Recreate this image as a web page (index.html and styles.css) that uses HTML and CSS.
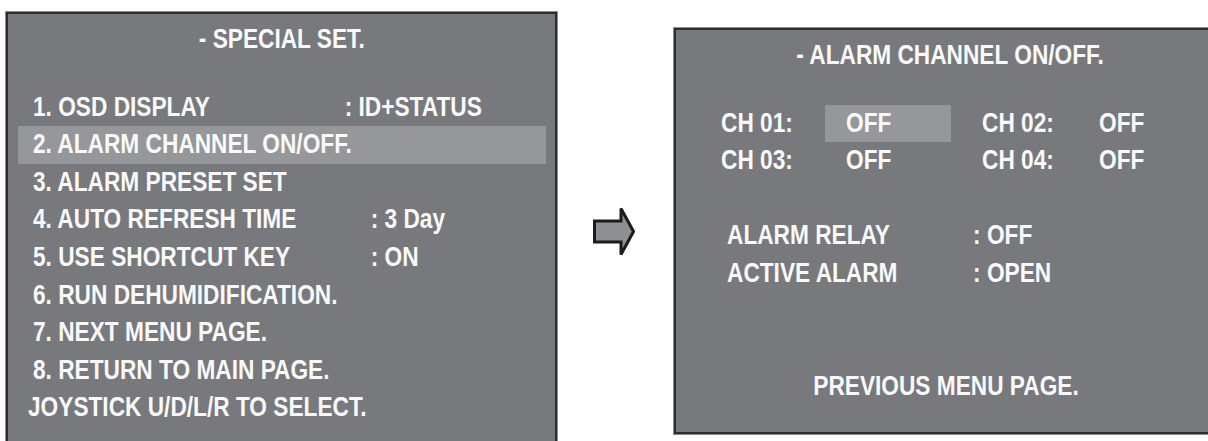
FILE: index.html
```html
<!DOCTYPE html>
<html lang="en">
<head>
    <meta charset="UTF-8">
    <meta name="viewport" content="width=device-width, initial-scale=1.0">
    <title>Special Set - Alarm Channel</title>
    <link rel="stylesheet" href="styles.css">
</head>
<body>

<div class="screen screen-special">
    <div class="screen-title"><span class="narrow center">- SPECIAL SET.</span></div>
    <ul class="menu">
        <li class="menu-item"><span class="narrow"><span class="item-label">1. OSD DISPLAY</span><span>: ID+STATUS</span></span></li>
        <li class="menu-item selected"><span class="narrow">2. ALARM CHANNEL ON/OFF.</span></li>
        <li class="menu-item"><span class="narrow">3. ALARM PRESET SET</span></li>
        <li class="menu-item"><span class="narrow"><span class="item-label long">4. AUTO REFRESH TIME</span><span>: 3 Day</span></span></li>
        <li class="menu-item"><span class="narrow"><span class="item-label long">5. USE SHORTCUT KEY</span><span>: ON</span></span></li>
        <li class="menu-item"><span class="narrow">6. RUN DEHUMIDIFICATION.</span></li>
        <li class="menu-item"><span class="narrow">7. NEXT MENU PAGE.</span></li>
        <li class="menu-item"><span class="narrow">8. RETURN TO MAIN PAGE.</span></li>
    </ul>
    <div class="screen-hint"><span class="narrow">JOYSTICK U/D/L/R TO SELECT.</span></div>
</div>

<div class="arrow">
    <svg width="42" height="50" viewBox="0 0 42 50">
        <polygon points="1.5,14 28,14 28,1.5 40.5,24.5 28,47.5 28,35 1.5,35"
                 fill="#8e8f93" stroke="#1c1c1c" stroke-width="3" stroke-linejoin="miter"/>
    </svg>
</div>

<div class="screen screen-alarm">
    <div class="screen-title"><span class="narrow center">- ALARM CHANNEL ON/OFF.</span></div>
    <div class="channels">
        <span class="ch-label"><span class="narrow">CH 01:</span></span>
        <span class="ch-value selected"><span class="narrow">OFF</span></span>
        <span class="ch-label second"><span class="narrow">CH 02:</span></span>
        <span class="ch-value"><span class="narrow">OFF</span></span>
        <span class="ch-label"><span class="narrow">CH 03:</span></span>
        <span class="ch-value"><span class="narrow">OFF</span></span>
        <span class="ch-label second"><span class="narrow">CH 04:</span></span>
        <span class="ch-value"><span class="narrow">OFF</span></span>
    </div>
    <div class="settings">
        <div class="setting"><span class="narrow"><span class="setting-label">ALARM RELAY</span><span>: OFF</span></span></div>
        <div class="setting"><span class="narrow"><span class="setting-label">ACTIVE ALARM</span><span>: OPEN</span></span></div>
    </div>
    <div class="screen-footer"><span class="narrow center">PREVIOUS MENU PAGE.</span></div>
</div>

</body>
</html>
```

FILE: styles.css
```css
html, body {
    overflow: hidden;
}
body {
    margin: 0;
    width: 1208px;
    height: 441px;
    background: #ffffff;
    display: flex;
    align-items: flex-start;
    font-family: "Liberation Sans", Arial, sans-serif;
    font-weight: bold;
    font-size: 27px;
    color: #f9f9f9;
}
/* the OSD font is a condensed sans, squeeze the regular one */
.narrow {
    display: inline-flex;
    white-space: nowrap;
    transform: scaleX(0.84);
    transform-origin: 0 50%;
}
.narrow.center {
    transform-origin: 50% 50%;
}
.screen {
    flex-shrink: 0;
    box-sizing: border-box;
    width: 551px;
    background: #78797d;
    border: 2px solid #2d2d2f;
    box-shadow: 0 0 0 1px #8c8c8c;
    line-height: 37.6px;
}
.screen-special {
    margin: 12px 0 0 6px;
    height: 440px;
}
.screen-alarm {
    margin-top: 28px;
    height: 406px;
}
.screen-title {
    margin-top: 7px;
    text-align: center;
}
.menu {
    list-style: none;
    margin: 30px 9px 0 10px;
    padding: 0;
}
.menu-item {
    height: 37.6px;
    padding-left: 15px;
}
.menu-item.selected {
    background: #96979b;
}
.item-label {
    width: 371px;
}
.item-label.long {
    width: 402px;
}
.screen-hint {
    padding-left: 20px;
}
.channels {
    display: grid;
    grid-template-columns: 104px 126px 127px 126px;
    margin-top: 30px;
    padding-left: 45px;
}
.ch-value {
    padding-left: 21px;
    height: 37.6px;
}
.ch-value.selected {
    background: #96979b;
}
.ch-label.second {
    padding-left: 31px;
}
.settings {
    margin-top: 37.6px;
    padding-left: 51px;
}
.setting-label {
    width: 293px;
}
.screen-footer {
    margin-top: 75px;
    text-align: center;
    padding-right: 6px;
}
.arrow {
    flex-shrink: 0;
    width: 117px;
    box-sizing: border-box;
    padding: 207px 0 0 36px;
}
.arrow svg {
    display: block;
}
```
